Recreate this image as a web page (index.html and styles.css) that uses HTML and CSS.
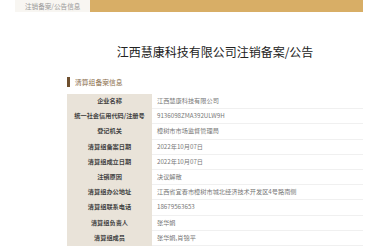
FILE: index.html
```html
<!DOCTYPE html>
<html lang="zh">
<head>
    <meta charset="UTF-8">
    <meta name="viewport" content="width=device-width, initial-scale=1.0">
    <title>注销备案/公告信息</title>
    <link rel="stylesheet" href="styles.css">
</head>
<body>
    <!-- 顶部标签栏 -->
    <div class="topbar">
        <div class="tab">注销备案/公告信息</div>
    </div>

    <h1 class="title">江西慧康科技有限公司注销备案/公告</h1>

    <div class="section">
        <div class="section-head">清算组备案信息</div>

        <table class="info">
            <tr><th>企业名称</th><td>江西慧康科技有限公司</td></tr>
            <tr><th>统一社会信用代码/注册号</th><td>9136098ZMA392ULW9H</td></tr>
            <tr><th>登记机关</th><td>樟树市市场监督管理局</td></tr>
            <tr><th>清算组备案日期</th><td>2022年10月07日</td></tr>
            <tr><th>清算组成立日期</th><td>2022年10月07日</td></tr>
            <tr><th>注销原因</th><td>决议解散</td></tr>
            <tr><th>清算组办公地址</th><td>江西省宜春市樟树市城北经济技术开发区4号路南侧</td></tr>
            <tr><th>清算组联系电话</th><td>18679563653</td></tr>
            <tr><th>清算组负责人</th><td>张华娟</td></tr>
            <tr><th>清算组成员</th><td>张华娟,肖锦平</td></tr>
        </table>
    </div>
</body>
</html>
```

FILE: styles.css
```css
body {
    font-family: "Noto Sans CJK SC", "Liberation Sans", sans-serif;
    margin: 0;
    padding: 0;
    background: #fff;
    color: #333;
}
.topbar {
    margin: 0 17px 0 15px;
    height: 12px;
    display: flex;
    background: #d8ae66;
}
.tab {
    width: 75px;
    padding-left: 10px;
    background: #f8f6f2;
    color: #9a9a9a;
    font-size: 6.6px;
    line-height: 11px;
    padding-top: 1px;
    box-sizing: border-box;
    white-space: nowrap;
}
.title {
    margin: 33px 17px 0 67px;
    text-align: center;
    font-size: 12px;
    line-height: 14px;
    font-weight: normal;
    color: #222;
}
.section {
    margin: 18px 17px 0 67px;
}
.section-head {
    font-size: 6.8px;
    line-height: 10px;
    color: #8a6d4b;
    padding-left: 5px;
    border-left: 3px solid #6e4f2e;
    margin-bottom: 7px;
}
.info {
    width: 100%;
    border-collapse: collapse;
}
.info th,
.info td {
    height: 14.2px;
    padding: 0;
    font-size: 6.2px;
    line-height: 8px;
    border-bottom: 1px solid #f0f0f0;
}
.info th {
    width: 85px;
    background: #e9e3d9;
    border-bottom-color: #e9e3d9;
    color: #444;
    font-weight: bold;
    text-align: center;
}
.info td {
    padding-left: 5px;
    color: #777;
    text-align: left;
}
```
